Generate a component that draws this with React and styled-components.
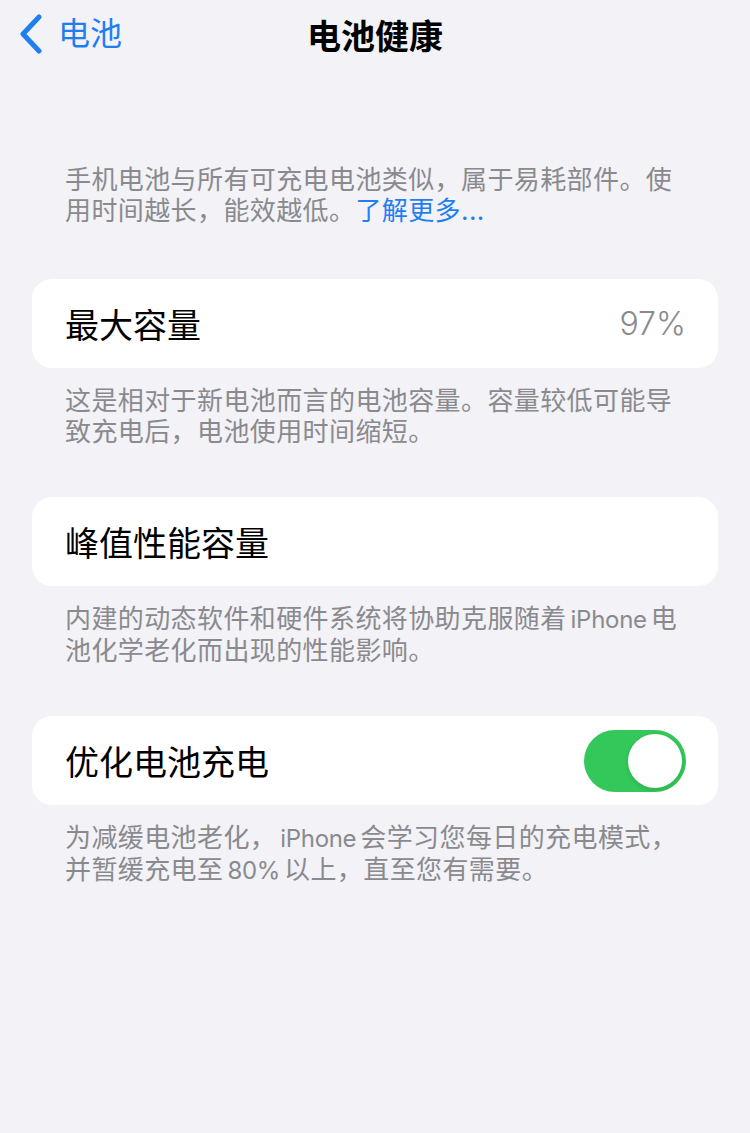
import React, { useState } from 'react'
import styled, { createGlobalStyle } from 'styled-components'

const GlobalStyle = createGlobalStyle`
  html, body {
    margin: 0;
    padding: 0;
    background: #f2f2f7;
  }
  body {
    font-family: Inter, "Noto Sans CJK SC", sans-serif;
    -webkit-font-smoothing: antialiased;
  }
`

const Page = styled.div`
  width: 750px;
  min-height: 1133px;
  background: #f2f2f7;
  box-sizing: border-box;
  padding: 0 32px;
`

const NavBar = styled.div`
  position: relative;
  height: 68px;
  display: flex;
  align-items: center;
  margin: 0 -32px;
  padding: 0 18px;
`

const BackButton = styled.div`
  display: flex;
  align-items: center;
  gap: 14px;
  color: #1f7ff0;
  font-size: 32px;
  line-height: 40px;
`

const NavTitle = styled.div`
  position: absolute;
  left: 0;
  right: 0;
  text-align: center;
  font-size: 34px;
  font-weight: 700;
  color: #000;
  pointer-events: none;
`

const Intro = styled.p`
  margin: 96px 0 0;
  padding: 0 33px;
  font-size: 26px;
  line-height: 31px;
  letter-spacing: 0.4px;
  color: #8a8a8e;
`

const Link = styled.span`
  color: #1f7ff0;
`

const Card = styled.div`
  margin-top: ${p => p.$top}px;
  height: 89px;
  background: #fff;
  border-radius: 20px;
  display: flex;
  align-items: center;
  justify-content: space-between;
  padding: 0 32px 0 33px;
`

const Label = styled.span`
  font-size: 34px;
  color: #000;
`

const Value = styled.span`
  font-size: 32px;
  font-weight: 300;
  color: #8a8a8e;
`

const Footer = styled.p`
  margin: 17px 0 0;
  padding: 0 33px;
  font-size: 26px;
  line-height: 31px;
  letter-spacing: 0.4px;
  color: #8a8a8e;
`

const Latin = styled.span`
  font-size: 24px;
  letter-spacing: -0.3px;
  margin: 0 4px;
`

const Toggle = styled.button`
  width: 102px;
  height: 62px;
  border: none;
  border-radius: 31px;
  padding: 4px;
  background: ${p => (p.$on ? '#34c759' : '#e9e9eb')};
  display: flex;
  justify-content: ${p => (p.$on ? 'flex-end' : 'flex-start')};
  cursor: pointer;
`

const Knob = styled.span`
  width: 54px;
  height: 54px;
  border-radius: 50%;
  background: #fff;
  box-shadow: 0 2px 4px rgba(0, 0, 0, 0.12);
`

const Chevron = () => (
  <svg width="26" height="40" viewBox="0 0 26 40">
    <polyline
      points="21,3 5,20 21,37"
      fill="none"
      stroke="#1f7ff0"
      strokeWidth="5"
      strokeLinecap="round"
      strokeLinejoin="round"
    />
  </svg>
)

const App = () => {
  const [optimized, setOptimized] = useState(true)
  return (
    <Page>
      <GlobalStyle />
      <NavBar>
        <BackButton>
          <Chevron />
          <span>电池</span>
        </BackButton>
        <NavTitle>电池健康</NavTitle>
      </NavBar>
      <Intro>
        手机电池与所有可充电电池类似，属于易耗部件。使用时间越长，能效越低。<Link>了解更多...</Link>
      </Intro>
      <Card $top={53}>
        <Label>最大容量</Label>
        <Value>97%</Value>
      </Card>
      <Footer>这是相对于新电池而言的电池容量。容量较低可能导致充电后，电池使用时间缩短。</Footer>
      <Card $top={50}>
        <Label>峰值性能容量</Label>
      </Card>
      <Footer>
        内建的动态软件和硬件系统将协助克服随着<Latin>iPhone</Latin>电池化学老化而出现的性能影响。
      </Footer>
      <Card $top={50}>
        <Label>优化电池充电</Label>
        <Toggle $on={optimized} onClick={() => setOptimized(!optimized)}>
          <Knob />
        </Toggle>
      </Card>
      <Footer>
        为减缓电池老化，<Latin>iPhone</Latin>会学习您每日的充电模式，并暂缓充电至<Latin>80%</Latin>以上，直至您有需要。
      </Footer>
    </Page>
  )
}

export default App
